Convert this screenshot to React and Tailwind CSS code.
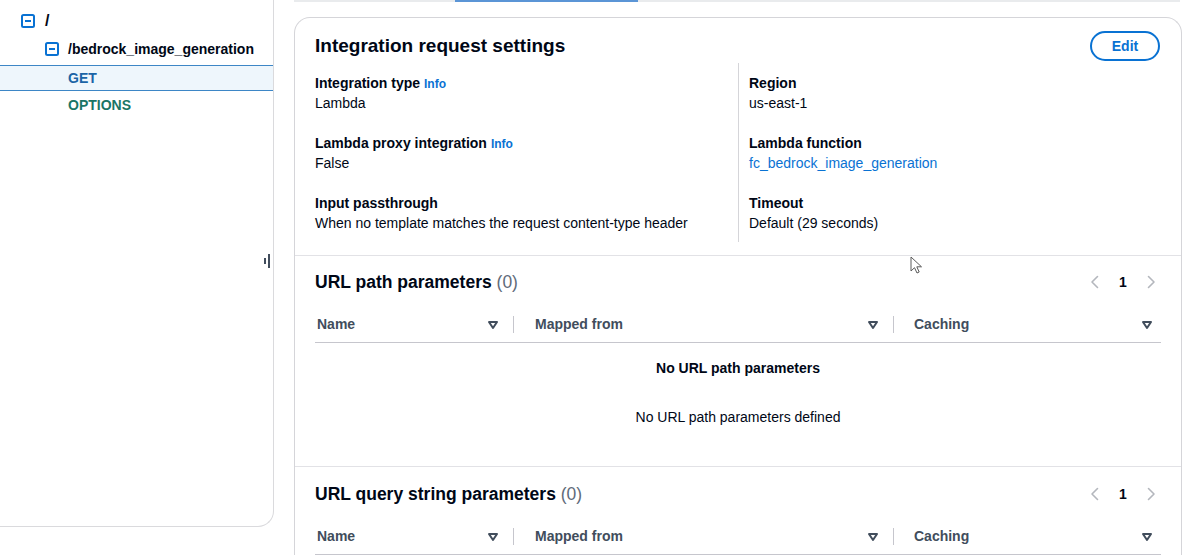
import React from "react"

const TreeIcon = () => (
    <svg width="16" height="16" viewBox="0 0 16 16" className="shrink-0 text-[#0972d3]">
        <rect x="2" y="2" width="12" height="12" rx="1.5" fill="none" stroke="currentColor" strokeWidth="2" />
        <path d="M5 8h6" stroke="currentColor" strokeWidth="2" />
    </svg>
)

const Caret = () => (
    <svg width="16" height="16" viewBox="0 0 16 16" className="shrink-0 text-[#414d5c]">
        <path d="M4 5h8l-4 6-4-6z" fill="none" stroke="currentColor" strokeWidth="2" strokeLinejoin="round" />
    </svg>
)

const Chevron = ({ dir }) => (
    <svg width="16" height="16" viewBox="0 0 16 16" className="text-[#b4b7bd]">
        <path
            d={dir === "left" ? "M10.5 2.5 5 8l5.5 5.5" : "M5.5 2.5 11 8l-5.5 5.5"}
            fill="none"
            stroke="currentColor"
            strokeWidth="1.6"
            strokeLinecap="round"
            strokeLinejoin="round"
        />
    </svg>
)

const Field = ({ label, info, children }) => (
    <div className="leading-5">
        <div className="font-bold text-[#000716]">
            {label}
            {info && <span className="ml-1 text-[12px] leading-none text-[#0972d3]">Info</span>}
        </div>
        <div className="text-[#000716]">{children}</div>
    </div>
)

const Pagination = () => (
    <div className="flex items-center gap-[10px] mr-[2px]">
        <Chevron dir="left" />
        <span className="w-[20px] text-center font-bold text-[#000716]">1</span>
        <Chevron dir="right" />
    </div>
)

const TableHeader = () => (
    <div className="flex h-[36px] items-center border-b border-[#c6c6cd] text-[14px] font-bold text-[#414d5c]">
        <div className="flex w-[198px] items-center pl-[2px] pr-[12px]">
            <span className="flex-1">Name</span>
            <Caret />
        </div>
        <div className="flex w-[380px] items-center pr-[12px]">
            <div className="h-[17px] w-px bg-[#c6c6cd]" />
            <span className="ml-[21px] flex-1">Mapped from</span>
            <Caret />
        </div>
        <div className="flex flex-1 items-center pr-[6px]">
            <div className="h-[17px] w-px bg-[#c6c6cd]" />
            <span className="ml-[20px] flex-1">Caching</span>
            <Caret />
        </div>
    </div>
)

const ParamSection = ({ title, empty }) => (
    <div className="px-5 pt-[14px]">
        <div className="flex h-[24px] items-center justify-between">
            <h3 className="text-[17.5px] font-bold text-[#000716]">
                {title} <span className="font-normal text-[#5f6b7a]">(0)</span>
            </h3>
            <Pagination />
        </div>
        <div className="mt-[13px]">
            <TableHeader />
        </div>
        {empty && (
            <div className="pt-[15px] pb-[39px] text-center leading-5 text-[#000716]">
                <div className="font-bold">{empty}</div>
                <div className="mt-[29px]">{empty} defined</div>
            </div>
        )}
    </div>
)

export default function App() {
    return (
        <div className="relative flex h-[555px] w-[1204px] overflow-hidden bg-white font-['Liberation_Sans',Arial,sans-serif] text-[14px] text-[#000716]">
            {/* Resource tree */}
            <div className="w-[294px] shrink-0">
                <div className="relative h-[527px] w-[274px] rounded-br-2xl border-r border-b border-[#dadadd] bg-white pt-[7px]">
                    <div className="flex h-[28px] items-center gap-[9px] pl-[20px]">
                        <TreeIcon />
                        <span className="text-[16px] font-bold">/</span>
                    </div>
                    <div className="flex h-[28px] items-center gap-[8px] pl-[44px]">
                        <TreeIcon />
                        <span className="font-bold">/bedrock_image_generation</span>
                    </div>
                    <div className="mt-[2px] flex h-[26px] items-center border-y border-[#3d86c6] bg-[#eef6fc] pl-[68px] font-bold text-[#1b64a6]">
                        GET
                    </div>
                    <div className="flex h-[28px] items-center pl-[68px] font-bold text-[#1a7566]">
                        OPTIONS
                    </div>
                    {/* resize handle */}
                    <div className="absolute left-[264px] top-[254px] flex items-center gap-[2px]">
                        <div className="h-[6px] w-[2px] bg-[#414d5c]" />
                        <div className="h-[14px] w-[2px] bg-[#414d5c]" />
                    </div>
                </div>
            </div>

            {/* Main */}
            <div className="w-[888px] shrink-0">
                <div className="flex h-[2px] w-[886px] bg-[#e9ebed]">
                    <div className="ml-[161px] w-[183px] bg-[#5b95d6]" />
                </div>

                <div className="mt-[15px] rounded-t-2xl border-x border-t border-[#d5d5d9]">
                    {/* Integration request settings */}
                    <div className="border-b border-[#e2e2e6] px-5 pt-[13px] pb-[13px]">
                        <div className="flex h-[30px] items-center justify-between">
                            <h2 className="text-[19px] font-bold text-[#000716]">Integration request settings</h2>
                            <button className="mr-[1px] h-[30px] w-[70px] rounded-full border-2 border-[#0972d3] text-[14px] font-bold text-[#0972d3]">
                                Edit
                            </button>
                        </div>
                        <div className="mt-[2px] flex">
                            <div className="flex w-[423px] flex-col gap-5 pt-[10px] pb-[9px]">
                                <Field label="Integration type" info>Lambda</Field>
                                <Field label="Lambda proxy integration" info>False</Field>
                                <Field label="Input passthrough">
                                    When no template matches the request content-type header
                                </Field>
                            </div>
                            <div className="flex flex-1 flex-col gap-5 border-l border-[#d5d5d9] pt-[10px] pb-[9px] pl-[10px]">
                                <Field label="Region">us-east-1</Field>
                                <Field label="Lambda function">
                                    <span className="text-[#0972d3]">fc_bedrock_image_generation</span>
                                </Field>
                                <Field label="Timeout">Default (29 seconds)</Field>
                            </div>
                        </div>
                    </div>

                    {/* URL path parameters */}
                    <div className="border-b border-[#e2e2e6]">
                        <ParamSection title="URL path parameters" empty="No URL path parameters" />
                    </div>

                    {/* URL query string parameters */}
                    <div className="pt-[1px]">
                        <ParamSection title="URL query string parameters" />
                    </div>
                </div>
            </div>

            {/* mouse pointer */}
            <svg className="absolute left-[910px] top-[256px]" width="12" height="18" viewBox="0 0 12 18">
                <path d="M1 1v14l3.5-3.3L7 17l2.2-1-2.4-5.2H11.5z" fill="white" stroke="#5a5a5a" strokeWidth="1" strokeLinejoin="round" />
            </svg>
        </div>
    )
}
